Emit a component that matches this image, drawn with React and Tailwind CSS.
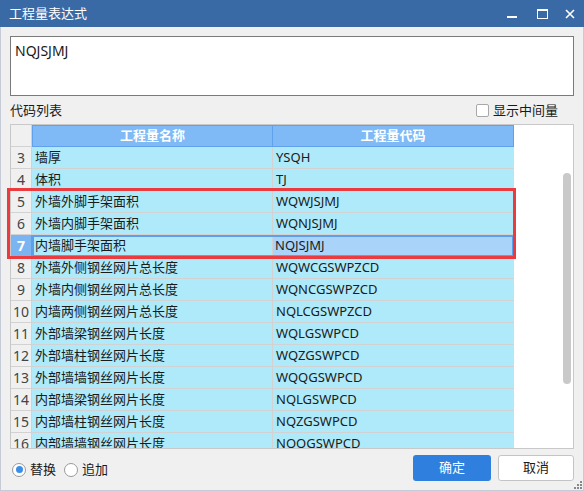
import React from "react";

const rows = [
  [3, "墙厚", "YSQH"],
  [4, "体积", "TJ"],
  [5, "外墙外脚手架面积", "WQWJSJMJ"],
  [6, "外墙内脚手架面积", "WQNJSJMJ"],
  [7, "内墙脚手架面积", "NQJSJMJ"],
  [8, "外墙外侧钢丝网片总长度", "WQWCGSWPZCD"],
  [9, "外墙内侧钢丝网片总长度", "WQNCGSWPZCD"],
  [10, "内墙两侧钢丝网片总长度", "NQLCGSWPZCD"],
  [11, "外部墙梁钢丝网片长度", "WQLGSWPCD"],
  [12, "外部墙柱钢丝网片长度", "WQZGSWPCD"],
  [13, "外部墙墙钢丝网片长度", "WQQGSWPCD"],
  [14, "内部墙梁钢丝网片长度", "NQLGSWPCD"],
  [15, "内部墙柱钢丝网片长度", "NQZGSWPCD"],
  [16, "内部墙墙钢丝网片长度", "NQQGSWPCD"],
];

const font = { fontFamily: '"Noto Sans", "Noto Sans CJK SC", sans-serif' };

function Row({ n, name, code }) {
  const sel = n === 7;
  if (sel) {
    return (
      <div className="flex h-[22px] shrink-0">
        <div className="w-[21px] h-full flex items-center justify-center bg-[#7ab5f2] text-white font-bold text-[14px] border-b border-[#d2d2d2] border-r border-r-[#5d9fe8]">
          {n}
        </div>
        <div className="flex h-full border-2 border-[#5d9fe8] w-[482px]">
          <div className="w-[239px] h-full bg-[#aeeaf9] flex items-center pl-[1px] border-r border-[#d2d2d2]">{name}</div>
          <div className="flex-1 h-full bg-[#aad3fa] flex items-center pl-[2px]">{code}</div>
        </div>
      </div>
    );
  }
  return (
    <div className="flex h-[22px] shrink-0">
      <div className="w-[21px] h-full flex items-center justify-center bg-[#f0f0f0] text-[#444] text-[14px] border-r border-b border-[#d2d2d2]">
        {n}
      </div>
      <div className="w-[241px] h-full bg-[#aeeaf9] flex items-center pl-[3px] border-r border-b border-[#d2d2d2]">{name}</div>
      <div className="w-[241px] h-full bg-[#aeeaf9] flex items-center pl-[3px] border-b border-[#d2d2d2]">{code}</div>
    </div>
  );
}

export default function App() {
  return (
    <div className="w-[584px] h-[491px] flex flex-col text-[13px] text-[#1a1a1a] bg-[#f0f0f0]" style={font}>
      {/* title bar */}
      <div className="h-[27px] shrink-0 bg-[#3a6aa5] flex items-center pl-[9px] text-white text-[13px]">
        <span className="flex-1">工程量表达式</span>
        <div className="flex items-center h-full">
          <div className="w-[32px] h-full flex items-center justify-center">
            <div className="w-[10px] h-[2px] bg-white mt-[7px]" />
          </div>
          <div className="w-[28px] h-full flex items-center justify-center">
            <div className="w-[11px] h-[10px] border border-white border-t-2" />
          </div>
          <div className="w-[28px] h-full flex items-center justify-center">
            <svg width="10" height="10" viewBox="0 0 10 10">
              <path d="M1 1 L9 9 M9 1 L1 9" stroke="white" strokeWidth="1.6" />
            </svg>
          </div>
        </div>
      </div>

      {/* body */}
      <div className="flex-1 flex flex-col border-x border-b border-[#c5ccd8] px-[9px] pt-[9px] relative">
        <div className="h-[60px] shrink-0 bg-white border border-[#7a7a7a] px-[4px] pt-[3px] text-[14px]">NQJSJMJ</div>

        <div className="h-[28px] shrink-0 flex items-center pt-[1px]">
          <span className="flex-1">代码列表</span>
          <label className="flex items-center gap-[4px] mr-[16px]">
            <span className="w-[13px] h-[13px] bg-white border border-[#a8a8a8] rounded-[2px]" />
            <span>显示中间量</span>
          </label>
        </div>

        {/* grid */}
        <div className="relative shrink-0">
          <div className="h-[325px] border border-[#c8c8c8] bg-white flex overflow-hidden">
            <div className="w-[503px] flex flex-col">
              <div className="flex h-[22px] shrink-0">
                <div className="w-[21px] h-full bg-[#f0f0f0] border-r border-b border-[#d2d2d2]" />
                <div className="w-[241px] h-full bg-[#7fbaf6] border border-[#5fa1ec] text-white font-bold flex items-center justify-center">工程量名称</div>
                <div className="w-[241px] h-full bg-[#7fbaf6] border border-l-0 border-[#5fa1ec] text-white font-bold flex items-center justify-center">工程量代码</div>
              </div>
              {rows.map(([n, name, code]) => (
                <Row key={n} n={n} name={name} code={code} />
              ))}
            </div>
            <div className="flex-1 flex justify-end pr-[2px]">
              <div className="w-[8px] h-[211px] mt-[48px] rounded-full bg-[#c9c9c9]" />
            </div>
          </div>
          {/* red highlight box */}
          <div className="absolute left-[-3px] top-[64px] w-[509px] h-[71px] border-[3px] border-[#ec3b3f] pointer-events-none" />
        </div>

        {/* bottom bar */}
        <div className="flex items-start pt-[6px]">
          <div className="flex items-center gap-[8px] mt-[5px] flex-1 pl-[2px]">
            <label className="flex items-center gap-[4px]">
              <span className="w-[14px] h-[14px] rounded-full border border-[#9a9a9a] bg-white flex items-center justify-center">
                <span className="w-[7px] h-[7px] rounded-full bg-[#3a8ee6]" />
              </span>
              <span>替换</span>
            </label>
            <label className="flex items-center gap-[4px]">
              <span className="w-[14px] h-[14px] rounded-full border border-[#9a9a9a] bg-white" />
              <span>追加</span>
            </label>
          </div>
          <button className="w-[78px] h-[26px] rounded-[3px] bg-[#2f80de] text-white text-[13px]">确定</button>
          <button className="w-[76px] h-[26px] rounded-[3px] bg-white border border-[#c4c4c4] text-[#1a1a1a] text-[13px] ml-[7px]">取消</button>
        </div>

        {/* resize grip */}
        <svg className="absolute right-[1px] bottom-[1px]" width="8" height="8" viewBox="0 0 8 8">
          <rect x="6" y="0" width="2" height="2" fill="#888" />
          <rect x="3" y="3" width="2" height="2" fill="#888" />
          <rect x="6" y="3" width="2" height="2" fill="#888" />
          <rect x="0" y="6" width="2" height="2" fill="#888" />
          <rect x="3" y="6" width="2" height="2" fill="#888" />
          <rect x="6" y="6" width="2" height="2" fill="#888" />
        </svg>
      </div>
    </div>
  );
}
